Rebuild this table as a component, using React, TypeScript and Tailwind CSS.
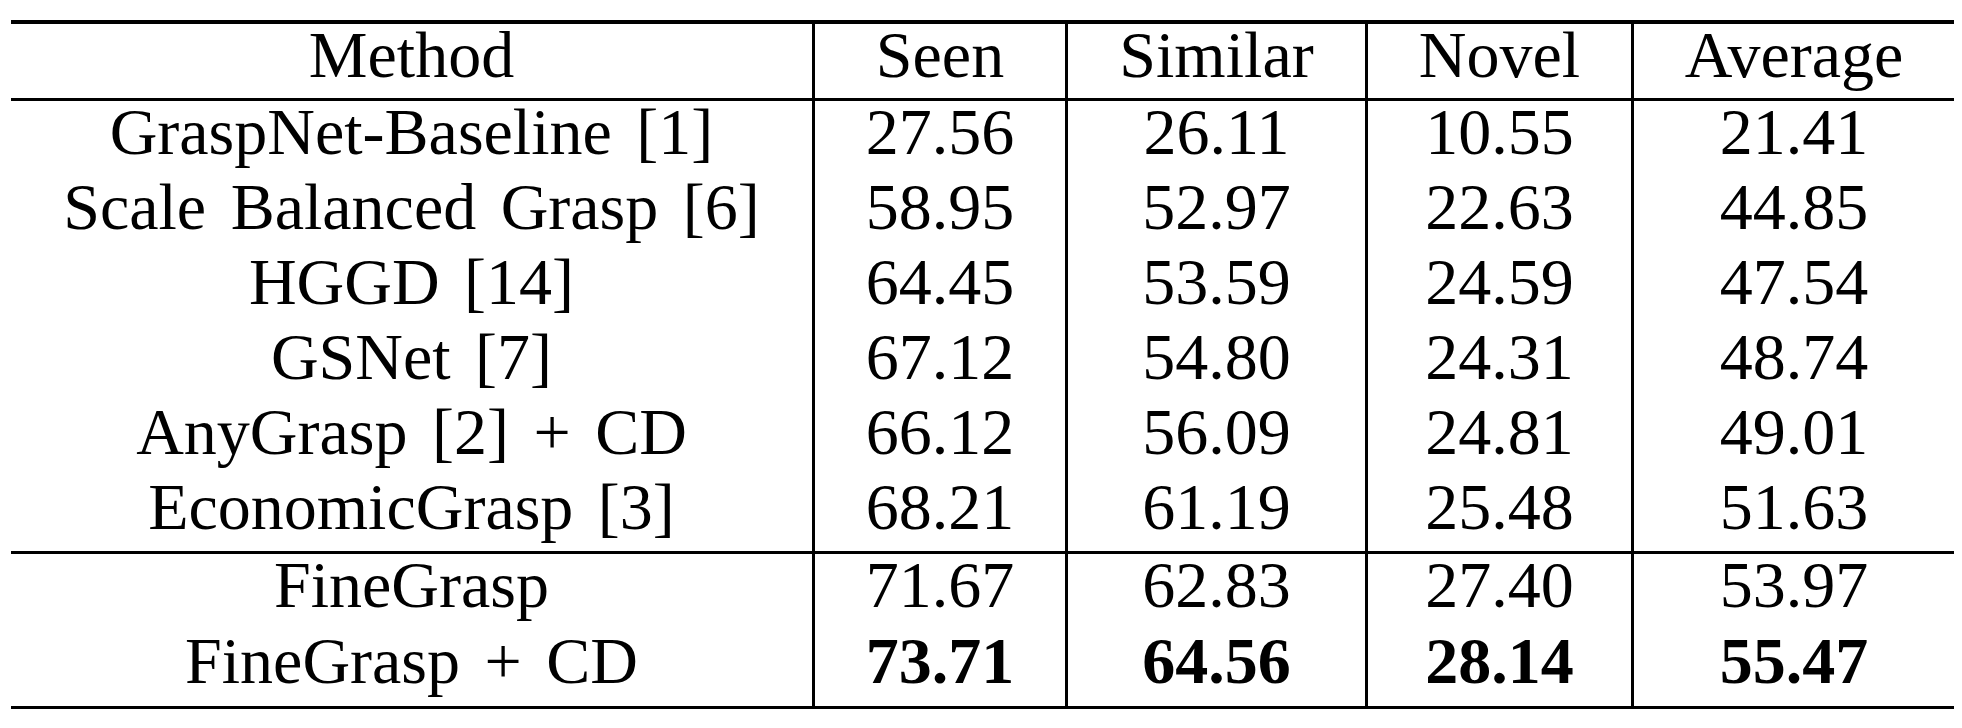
const header = ["Method", "Seen", "Similar", "Novel", "Average"];

const baseRows = [
  ["GraspNet-Baseline [1]", "27.56", "26.11", "10.55", "21.41"],
  ["Scale Balanced Grasp [6]", "58.95", "52.97", "22.63", "44.85"],
  ["HGGD [14]", "64.45", "53.59", "24.59", "47.54"],
  ["GSNet [7]", "67.12", "54.80", "24.31", "48.74"],
  ["AnyGrasp [2] + CD", "66.12", "56.09", "24.81", "49.01"],
  ["EconomicGrasp [3]", "68.21", "61.19", "25.48", "51.63"],
];

const oursRows = [
  { cells: ["FineGrasp", "71.67", "62.83", "27.40", "53.97"], bold: false },
  { cells: ["FineGrasp + CD", "73.71", "64.56", "28.14", "55.47"], bold: true },
];

// widths incl. the 3px left rule on cols 2-5
const colClass = [
  "w-[801px]",
  "w-[253px] border-l-[3px] border-black",
  "w-[300px] border-l-[3px] border-black",
  "w-[266px] border-l-[3px] border-black",
  "w-[323px] border-l-[3px] border-black",
];

function Row({ cells, h, bold }: { cells: string[]; h: string; bold?: boolean }) {
  return (
    <div className="flex">
      {cells.map((c, i) => (
        <div
          key={i}
          className={`${colClass[i]} ${h} text-center leading-[61px] whitespace-nowrap [word-spacing:8px] ${bold && i > 0 ? "font-bold" : ""}`}
        >
          {c}
        </div>
      ))}
    </div>
  );
}

function Rule({ thick }: { thick?: boolean }) {
  return <div className={`${thick ? "h-[4px]" : "h-[3px]"} bg-black`} />;
}

export default function App() {
  return (
    <div className="w-[1962px] h-[728px] bg-white pt-[20px] pl-[11px] text-black text-[66px] font-['Liberation_Serif',serif]">
      <div className="w-[1943px]">
        <Rule thick />
        <Row cells={header} h="h-[74px]" />
        <Rule />
        {baseRows.map((r, i) => (
          <Row key={i} cells={r} h="h-[75px]" />
        ))}
        <Rule />
        {oursRows.map((r, i) => (
          <Row key={i} cells={r.cells} h="h-[76px]" bold={r.bold} />
        ))}
        <Rule />
      </div>
    </div>
  );
}
